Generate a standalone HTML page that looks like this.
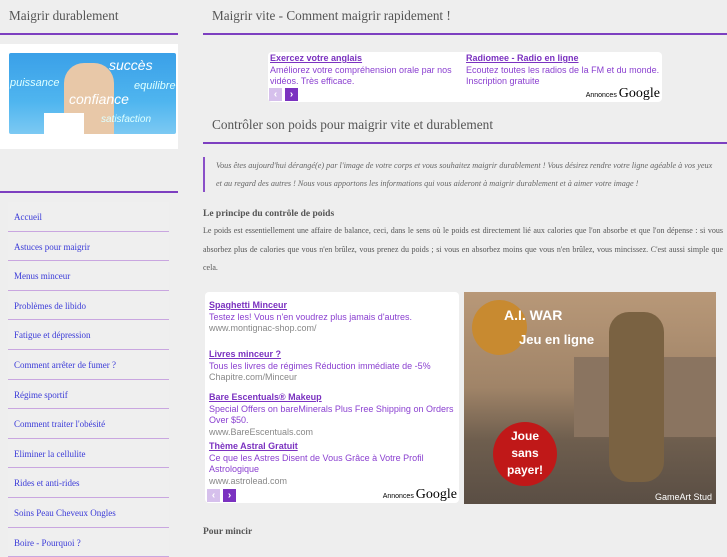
<!DOCTYPE html>
<html><head><meta charset="utf-8"><style>
*{margin:0;padding:0;box-sizing:border-box}
body{width:727px;height:545px;overflow:hidden;background:#eeeeee;font-family:"Liberation Serif",serif;color:#555;position:relative}
.a{position:absolute}
.line{position:absolute;height:2px;background:#7d3fc0}
.nav{position:absolute;left:8px;width:161px;height:29.6px;border-bottom:1px solid #c9a6e0;font-size:9px;color:#3a3ad8;padding:10px 0 0 6px;background:#efefef}
.ad{font-family:"Liberation Sans",sans-serif;color:#8a3fd0;font-size:9px}
.ad b{font-weight:bold;text-decoration:underline;color:#7b32c0}
.u{color:#888}
.btn{position:absolute;width:13px;height:13px;color:#fff;font-size:10px;font-weight:bold;text-align:center;line-height:13px;font-family:"Liberation Sans",sans-serif}
</style></head><body>
<div class="a" style="left:9px;top:8px;font-size:13.2px">Maigrir durablement</div>
<div class="line" style="left:0;top:33px;width:178px"></div>
<div class="a" style="left:0;top:44px;width:178px;height:105px;background:#fff"></div>
<div class="a" style="left:9px;top:53px;width:167px;height:81px;background:linear-gradient(180deg,#3aa0e8,#4fb5ef 60%,#7cc9f3);border-radius:2px;overflow:hidden">
<div class="a" style="left:55px;top:10px;width:50px;height:75px;background:#e8c8a8;border-radius:20px 20px 0 0"></div>
<div class="a" style="left:35px;top:60px;width:40px;height:21px;background:#fff"></div>
<div class="a" style="left:100px;top:4px;color:#fff;font:italic 14px 'Liberation Sans',sans-serif">succès</div>
<div class="a" style="left:1px;top:24px;color:#dff;font:italic 11px 'Liberation Sans',sans-serif">puissance</div>
<div class="a" style="left:125px;top:27px;color:#dff;font:italic 11px 'Liberation Sans',sans-serif">equilibre</div>
<div class="a" style="left:60px;top:38px;color:#fff;font:italic 14px 'Liberation Sans',sans-serif">confiance</div>
<div class="a" style="left:92px;top:61px;color:#dff;font:italic 10px 'Liberation Sans',sans-serif">satisfaction</div>
</div>
<div class="line" style="left:0;top:191px;width:178px"></div>
<div class="nav" style="top:202px">Accueil</div>
<div class="nav" style="top:231.6px">Astuces pour maigrir</div>
<div class="nav" style="top:261.2px">Menus minceur</div>
<div class="nav" style="top:290.8px">Problèmes de libido</div>
<div class="nav" style="top:320.4px">Fatigue et dépression</div>
<div class="nav" style="top:350px">Comment arrêter de fumer ?</div>
<div class="nav" style="top:379.6px">Régime sportif</div>
<div class="nav" style="top:409.2px">Comment traiter l'obésité</div>
<div class="nav" style="top:438.8px">Eliminer la cellulite</div>
<div class="nav" style="top:468.4px">Rides et anti-rides</div>
<div class="nav" style="top:498px">Soins Peau Cheveux Ongles</div>
<div class="nav" style="top:527.6px">Boire - Pourquoi ?</div>

<div class="a" style="left:212px;top:8px;font-size:13.2px">Maigrir vite - Comment maigrir rapidement !</div>
<div class="line" style="left:203px;top:33px;width:524px"></div>
<div class="a ad" style="left:268px;top:52px;width:394px;height:50px;background:#fff;border-radius:4px;line-height:11.5px">
<div class="a" style="left:2px;top:1px;width:190px"><b>Exercez votre anglais</b><br>Améliorez votre compréhension orale par nos vidéos. Très efficace.</div>
<div class="a" style="left:198px;top:1px;width:195px"><b>Radiomee - Radio en ligne</b><br>Ecoutez toutes les radios de la FM et du monde. Inscription gratuite</div>
<div class="btn" style="left:1px;top:36px;background:#d6c0ec">‹</div><div class="btn" style="left:17px;top:36px;background:#7b32c0">›</div>
<div class="a" style="right:2px;top:34px;color:#000;font-size:7px">Annonces <span style="font:14px 'Liberation Serif',serif">Google</span></div>
</div>
<div class="a" style="left:212px;top:117px;font-size:13.3px">Contrôler son poids pour maigrir vite et durablement</div>
<div class="line" style="left:203px;top:142px;width:524px"></div>
<div class="a" style="left:203px;top:157px;width:520px;height:35px;border-left:2px solid #8a4fc8;padding:0 4px 0 11px;font-style:italic;font-size:8.2px;line-height:18px;color:#666">Vous êtes aujourd'hui dérangé(e) par l'image de votre corps et vous souhaitez maigrir durablement ! Vous désirez rendre votre ligne agéable à vos yeux et au regard des autres ! Nous vous apportons les informations qui vous aideront à maigrir durablement et à aimer votre image !</div>
<div class="a" style="left:203px;top:209px;font-size:9.5px;font-weight:bold">Le principe du contrôle de poids</div>
<div class="a" style="left:203px;top:222px;width:520px;font-size:8px;line-height:18.5px;text-align:justify">Le poids est essentiellement une affaire de balance, ceci, dans le sens où le poids est directement lié aux calories que l'on absorbe et que l'on dépense : si vous absorbez plus de calories que vous n'en brûlez, vous prenez du poids ; si vous en absorbez moins que vous n'en brûlez, vous mincissez. C'est aussi simple que cela.</div>

<div class="a ad" style="left:205px;top:292px;width:254px;height:211px;background:#fff;border-radius:4px;line-height:11.5px">
<div class="a" style="left:4px;top:8px;width:245px"><b>Spaghetti Minceur</b><br>Testez les! Vous n'en voudrez plus jamais d'autres.<br><span class="u">www.montignac-shop.com/</span></div>
<div class="a" style="left:4px;top:57px;width:245px"><b>Livres minceur ?</b><br>Tous les livres de régimes Réduction immédiate de -5%<br><span class="u">Chapitre.com/Minceur</span></div>
<div class="a" style="left:4px;top:100px;width:245px"><b>Bare Escentuals® Makeup</b><br>Special Offers on bareMinerals Plus Free Shipping on Orders Over $50.<br><span class="u">www.BareEscentuals.com</span></div>
<div class="a" style="left:4px;top:149px;width:245px"><b>Thème Astral Gratuit</b><br>Ce que les Astres Disent de Vous Grâce à Votre Profil Astrologique<br><span class="u">www.astrolead.com</span></div>
<div class="btn" style="left:2px;top:197px;background:#d6c0ec">‹</div><div class="btn" style="left:18px;top:197px;background:#7b32c0">›</div>
<div class="a" style="right:2px;top:195px;color:#000;font-size:7px">Annonces <span style="font:14px 'Liberation Serif',serif">Google</span></div>
</div>
<div class="a" style="left:464px;top:292px;width:252px;height:212px;background:linear-gradient(180deg,#b89878 0%,#a08468 45%,#6e5e4e 70%,#5a4e44 100%);overflow:hidden">
<div class="a" style="left:110px;top:65px;width:142px;height:80px;background:#8a7460"></div>
<div class="a" style="left:145px;top:20px;width:55px;height:170px;background:#7a6242;border-radius:20px"></div>
<div class="a" style="left:8px;top:8px;width:55px;height:55px;border-radius:50%;background:#c88a30"></div>
<div class="a" style="left:40px;top:15px;color:#fff;font:bold 14px 'Liberation Sans',sans-serif">A.I. WAR</div>
<div class="a" style="left:55px;top:40px;color:#fff;font:bold 13px 'Liberation Sans',sans-serif">Jeu en ligne</div>
<div class="a" style="left:29px;top:130px;width:64px;height:64px;border-radius:50%;background:#c01818;color:#fff;font:bold 12px/17px 'Liberation Sans',sans-serif;text-align:center;padding-top:6px">Joue<br>sans<br>payer!</div>
<div class="a" style="right:4px;bottom:2px;color:#fff;font:9px 'Liberation Sans',sans-serif">GameArt Stud</div>
</div>
<div class="a" style="left:203px;top:527px;font-size:9.5px;font-weight:bold">Pour mincir</div>
</body></html>
